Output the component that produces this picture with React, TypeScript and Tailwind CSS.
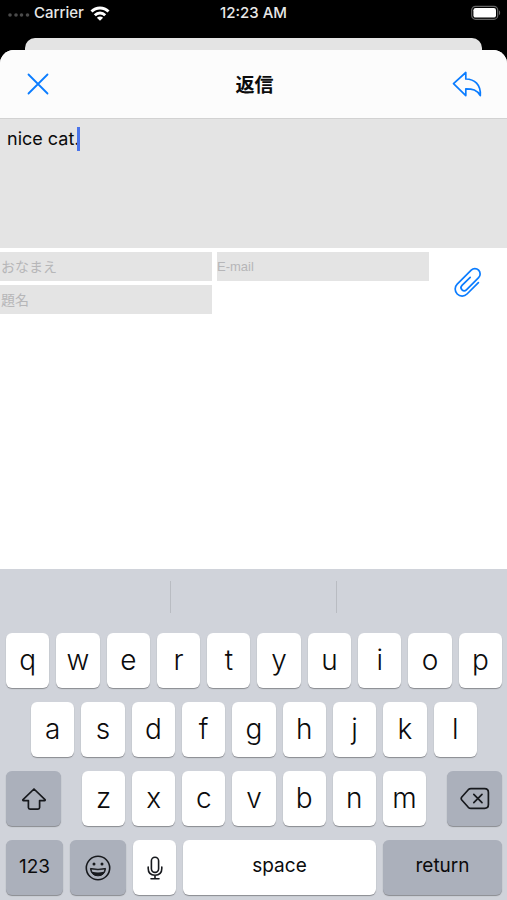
import type { ReactNode } from "react";
import clsx from "clsx";

const TOP_ROW = ["q", "w", "e", "r", "t", "y", "u", "i", "o", "p"];
const HOME_ROW = ["a", "s", "d", "f", "g", "h", "j", "k", "l"];
const BOTTOM_ROW = ["z", "x", "c", "v", "b", "n", "m"];

interface KeyProps {
  children: ReactNode;
  label?: string;
  dark?: boolean;
  className?: string;
}

function Key({ children, label, dark, className }: KeyProps) {
  return (
    <button
      type="button"
      aria-label={label}
      className={clsx(
        "flex h-[55px] min-w-0 items-center justify-center rounded-md shadow-[0_1px_1px_#898b90]",
        dark ? "bg-[#abb0bb]" : "bg-white",
        className
      )}
    >
      {children}
    </button>
  );
}

function LetterKeys({ letters }: { letters: string[] }) {
  return (
    <>
      {letters.map((letter) => (
        <Key key={letter} className="flex-1 pb-0.5 text-[28px] font-light">
          {letter}
        </Key>
      ))}
    </>
  );
}

function StatusBar() {
  return (
    <div className="grid h-[38px] grid-cols-3 items-start px-2 pt-1 text-[15px] leading-[18px] font-medium text-[#e8e8e8]">
      <div className="flex items-center gap-1">
        <svg width="22" height="10" viewBox="0 0 22 10" fill="#4b4b4b">
          <circle cx="2" cy="7" r="1.8" />
          <circle cx="8" cy="7" r="1.8" />
          <circle cx="13.5" cy="7" r="1.8" />
          <circle cx="19.5" cy="7" r="1.8" />
        </svg>
        <span>Carrier</span>
        <svg
          width="20"
          height="15"
          viewBox="0 0 20 15"
          fill="none"
          stroke="#fff"
          strokeWidth="2.9"
          className="ml-0.5"
        >
          <path d="M1.5 5.6C6.3 .7 13.7 .7 18.5 5.6" />
          <path d="M4.8 9.2C7.8 6.2 12.2 6.2 15.2 9.2" />
          <path d="M10 14.8L6.9 11.7C8.7 10 11.3 10 13.1 11.7Z" fill="#fff" stroke="none" />
        </svg>
      </div>
      <div className="text-center">12:23 AM</div>
      <svg width="30" height="18" viewBox="0 0 30 18" className="-mr-0.5 justify-self-end">
        <rect x=".7" y="2.3" width="26" height="13" rx="3.8" fill="none" stroke="#666" strokeWidth="1.2" />
        <rect x="2.4" y="4" width="22.6" height="9.6" rx="2.2" fill="#fff" />
        <path d="M28 6.6V11.1C29.5 10.6 29.5 7.1 28 6.6Z" fill="#666" />
      </svg>
    </div>
  );
}

function Header() {
  return (
    <header className="grid h-[69px] grid-cols-3 items-center rounded-t-[14px] border-b border-[#d2d2d2] bg-[#fcfcfc] pr-[25px] pl-[27px]">
      <button type="button" aria-label="閉じる" className="justify-self-start">
        <svg width="22" height="22" viewBox="0 0 22 22" stroke="#0a7cff" strokeWidth="1.8" strokeLinecap="round">
          <path d="M1.5 1.5L20.5 20.5M20.5 1.5L1.5 20.5" />
        </svg>
      </button>
      <h1 className="pt-1 text-center text-[19px] leading-6 font-bold">返信</h1>
      <button type="button" aria-label="送信" className="justify-self-end">
        <svg
          width="30"
          height="26"
          viewBox="0 0 30 26"
          fill="none"
          stroke="#0a7cff"
          strokeWidth="1.7"
          strokeLinejoin="round"
        >
          <path d="M1.5 12.7L13.8 1.5V8C22.5 8.2 29 13.5 28.3 24.6C25 18.8 20.5 17.8 13.8 17.8V24.6Z" />
        </svg>
      </button>
    </header>
  );
}

function Field({ label, className }: { label: string; className: string }) {
  return (
    <input
      type="text"
      aria-label={label}
      placeholder={label}
      className={clsx(
        "h-[29px] w-full min-w-0 bg-[#e4e4e4] outline-none placeholder:text-[#b6b6b8]",
        className
      )}
    />
  );
}

function ReplyForm() {
  return (
    <form className="flex-1">
      <div className="relative">
        <textarea
          aria-label="本文"
          defaultValue="nice cat."
          className="block h-[129px] w-full resize-none bg-[#e4e4e4] px-[7px] py-2 text-[18px] leading-6 outline-none"
        />
        <span className="absolute top-2 left-[77px] h-6 w-[3px] bg-[#4a74ea]" />
      </div>
      <div className="flex items-start pt-1">
        <div className="grid flex-1 grid-cols-2 gap-x-[5px] gap-y-1">
          <Field label="おなまえ" className="px-px text-[14px]" />
          <Field label="E-mail" className="font-['Liberation_Sans',sans-serif] text-[13px]" />
          <Field label="題名" className="px-px text-[14px]" />
        </div>
        <button type="button" aria-label="ファイルを添付" className="flex h-[60px] w-[78px] items-center justify-center">
          <svg
            width="28"
            height="30"
            viewBox="0 0 28 30"
            fill="none"
            stroke="#0a7cff"
            strokeWidth="1.7"
            strokeLinecap="round"
          >
            <path d="M24.4 15.6L13 27A6.9 6.9 0 0 1 3.2 17.2L17.2 3.2A5.2 5.2 0 0 1 24.6 10.6L12.4 22.8A3.1 3.1 0 0 1 8 18.4L16.2 10.4" />
          </svg>
        </button>
      </div>
    </form>
  );
}

function Keyboard() {
  return (
    <section aria-label="キーボード" className="bg-[#d0d3da] pr-[5px] pb-[5px] pl-1.5">
      <div className="grid h-16 grid-cols-3 pt-3">
        <div className="h-8 border-r border-[#b9bcc2]" />
        <div className="h-8 border-r border-[#b9bcc2]" />
      </div>
      <div className="flex flex-col gap-[14px]">
        <div className="flex gap-[7px]">
          <LetterKeys letters={TOP_ROW} />
        </div>
        <div className="flex gap-[7px] px-[25px]">
          <LetterKeys letters={HOME_ROW} />
        </div>
        <div className="flex gap-[21px]">
          <Key label="shift" dark className="w-[55px]">
            <svg
              width="26"
              height="24"
              viewBox="0 0 26 24"
              fill="none"
              stroke="#17191d"
              strokeWidth="1.7"
              strokeLinejoin="round"
            >
              <path d="M13 2L24 12.6C24.4 13.1 24.2 13.6 23.6 13.6H18.6V20.6C18.6 21.6 18 22.2 17 22.2H9C8 22.2 7.4 21.6 7.4 20.6V13.6H2.4C1.8 13.6 1.6 13.1 2 12.6Z" />
            </svg>
          </Key>
          <div className="flex flex-1 gap-[7px]">
            <LetterKeys letters={BOTTOM_ROW} />
          </div>
          <Key label="delete" dark className="w-[55px]">
            <svg
              width="30"
              height="23"
              viewBox="0 0 30 23"
              fill="none"
              stroke="#17191d"
              strokeWidth="1.7"
              strokeLinecap="round"
              strokeLinejoin="round"
            >
              <path d="M11 1.6H24.6Q28.4 1.6 28.4 5.4V17.6Q28.4 21.4 24.6 21.4H11Q9.4 21.4 8.3 20.3L1.8 13Q.6 11.5 1.8 10L8.3 2.7Q9.4 1.6 11 1.6Z" />
              <path d="M13.8 7.3L22 15.7M22 7.3L13.8 15.7" />
            </svg>
          </Key>
        </div>
        <div className="flex gap-[7px]">
          <Key dark className="w-[57px] text-[19px]">
            123
          </Key>
          <Key label="emoji" dark className="w-14">
            <svg width="26" height="26" viewBox="0 0 26 26">
              <circle cx="13" cy="13" r="11.7" fill="none" stroke="#17191d" strokeWidth="1.6" />
              <circle cx="9" cy="9" r="1.5" fill="#17191d" />
              <circle cx="17" cy="9" r="1.5" fill="#17191d" />
              <path
                d="M5.4 13.4Q13 15.2 20.6 13.4Q19.8 20.8 13 20.8T5.4 13.4Z"
                fill="#17191d"
                stroke="#17191d"
                strokeLinejoin="round"
              />
              <path d="M6.6 14.5Q13 16 19.4 14.5L18.7 16.7Q13 18.2 7.3 16.7Z" fill="#abb0bb" />
            </svg>
          </Key>
          <Key label="dictate" className="w-[43px]">
            <svg
              width="16"
              height="24"
              viewBox="0 0 16 24"
              fill="none"
              stroke="#17191d"
              strokeWidth="1.6"
              strokeLinecap="round"
            >
              <rect x="4.4" y="1.2" width="7.2" height="15.2" rx="3.6" />
              <path d="M1.2 11V12.6C1.2 16.8 4 19.2 8 19.2S14.8 16.8 14.8 12.6V11M8 19.2V22.6M4 22.8H12" />
            </svg>
          </Key>
          <Key className="flex-1 pb-0.5 text-[19px]">space</Key>
          <Key dark className="w-[119px] pb-0.5 text-[19px]">
            return
          </Key>
        </div>
      </div>
    </section>
  );
}

export default function App() {
  return (
    <div className="flex min-h-screen flex-col bg-black font-['Inter','Noto_Sans_CJK_JP',sans-serif] text-[#0b0b0c]">
      <StatusBar />
      <div className="mx-[25px] h-3 rounded-t-[10px] bg-[#e4e4e4]" />
      <main className="flex flex-1 flex-col rounded-t-[14px] bg-white">
        <Header />
        <ReplyForm />
        <Keyboard />
      </main>
    </div>
  );
}
